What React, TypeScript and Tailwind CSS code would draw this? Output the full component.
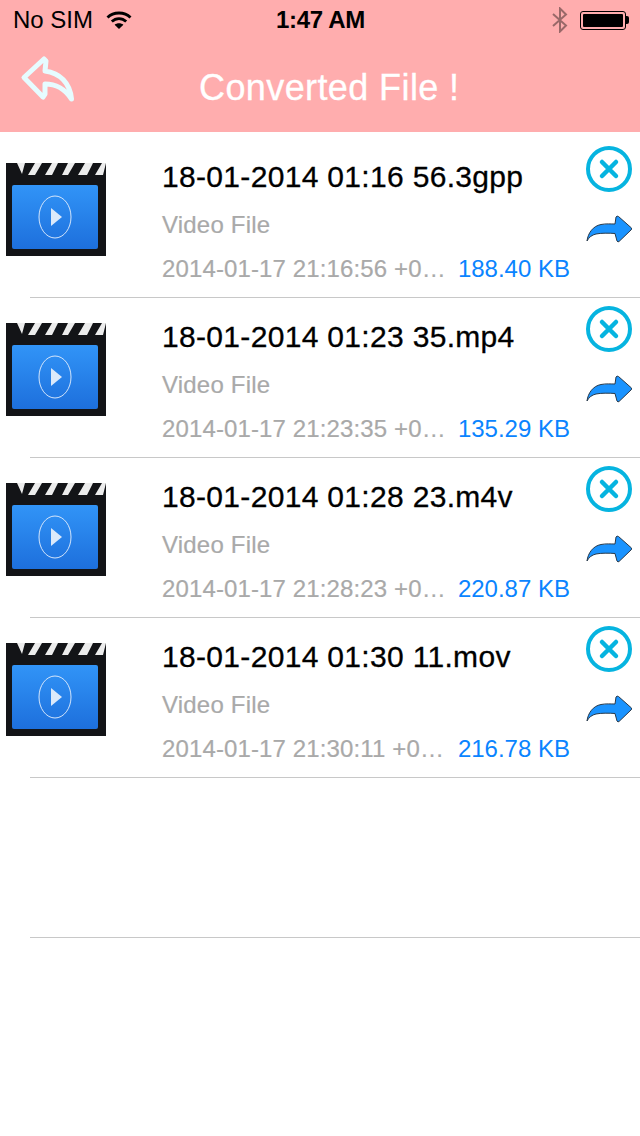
const files = [
  { name: "18-01-2014 01:16 56.3gpp", date: "2014-01-17 21:16:56 +0…", size: "188.40 KB" },
  { name: "18-01-2014 01:23 35.mp4", date: "2014-01-17 21:23:35 +0…", size: "135.29 KB" },
  { name: "18-01-2014 01:28 23.m4v", date: "2014-01-17 21:28:23 +0…", size: "220.87 KB" },
  { name: "18-01-2014 01:30 11.mov", date: "2014-01-17 21:30:11 +0…", size: "216.78 KB" },
]

function WifiIcon() {
  return (
    <svg width="26" height="20" viewBox="0 0 26 20" className="ml-[13px]">
      <path d="M1.5 7.5 C7.5 1.5 18.5 1.5 24.5 7.5" fill="none" stroke="#000" strokeWidth="2.8" />
      <path d="M5.8 11.6 C10 7.6 16 7.6 20.2 11.6" fill="none" stroke="#000" strokeWidth="2.8" />
      <path d="M13 19 L8.6 14.8 C11 12.8 15 12.8 17.4 14.8 Z" fill="#000" />
    </svg>
  )
}

function BluetoothIcon() {
  return (
    <svg width="16" height="26" viewBox="0 0 16 26" className="mr-[12px]">
      <path d="M1 7 L14 18.5 L8 24.5 L8 1.5 L14 7.5 L1 19" fill="none" stroke="#000" strokeOpacity="0.4" strokeWidth="2" />
    </svg>
  )
}

function BatteryIcon() {
  return (
    <div className="flex items-center mr-[11px]">
      <div className="w-[46px] h-[19px] rounded-[3px] border border-black p-[2px]">
        <div className="w-full h-full rounded-[1px] bg-black" />
      </div>
      <div className="w-[3px] h-[8px] bg-black rounded-r-[2px]" />
    </div>
  )
}

function BackIcon() {
  return (
    <svg width="60" height="52" viewBox="0 0 60 52">
      <path
        d="M6 24.5 L26 6 L28 8 L27 18 C42 20 52 30 53.5 46 C46 35 38 31 27 31 L27 41 L25 44 Z"
        fill="none"
        stroke="#e6fcff"
        strokeWidth="5"
        strokeLinejoin="round"
      />
    </svg>
  )
}

function Thumb() {
  return (
    <svg width="100" height="93" viewBox="0 0 100 93">
      <defs>
        <linearGradient id="screen" x1="0" y1="0" x2="0" y2="1">
          <stop offset="0" stopColor="#3194f7" />
          <stop offset="1" stopColor="#1d6fdc" />
        </linearGradient>
      </defs>
      <rect width="100" height="93" fill="#131417" />
      <path d="M11 0 L19 0 L16 11 Z M29 0 L36 0 L29 12 L22 12 Z M46 0 L52 0 L46 12 L39 12 Z M62 0 L69 0 L62 12 L56 12 Z M79 0 L87 0 L81 12 L72 12 Z M96 0 L100 0 L97 12 L89 12 Z" fill="#ececec" />
      <rect x="6" y="22" width="86" height="64" rx="2" fill="url(#screen)" />
      <ellipse cx="49" cy="54" rx="16" ry="21" fill="none" stroke="#d5e6fb" strokeWidth="1" />
      <path d="M45 45 L56 54 L45 63 Z" fill="#dbe9fa" />
    </svg>
  )
}

function ShareIcon() {
  return (
    <svg width="46" height="28" viewBox="0 0 46 28">
      <path
        d="M1 26 C2 18 7 11 15 9.5 C20 8.5 25 9 29 9 L30 2 Q31 0.5 32.5 1.5 L45.5 13 Q46 14 45 15 L33 26.5 Q32 27.5 31 26 L29 18.5 C23 18 15 18 10 19 C6 20 3 22 1 26 Z"
        fill="#1a93ff"
        stroke="#2a3a4a"
        strokeWidth="1"
      />
    </svg>
  )
}

function CloseIcon() {
  return (
    <svg width="46" height="46" viewBox="0 0 46 46">
      <circle cx="23" cy="23" r="21" fill="none" stroke="#06b4e0" strokeWidth="4" />
      <path d="M16 16 L30 30 M30 16 L16 30" stroke="#06b4e0" strokeWidth="4.5" strokeLinecap="round" />
    </svg>
  )
}

export default function App() {
  return (
    <div className="w-[640px] h-[1136px] bg-white overflow-hidden font-['Liberation_Sans',sans-serif]">
      {/* Status + nav bar */}
      <div className="h-[132px] bg-[#ffadae]">
        <div className="h-[40px] flex items-center text-black text-[24px]">
          <div className="flex-1 flex items-center pl-[13px]">
            <span>No SIM</span>
            <WifiIcon />
          </div>
          <div className="font-bold tracking-[-0.3px] pr-[12px]">1:47 AM</div>
          <div className="flex-1 flex items-center justify-end">
            <BluetoothIcon />
            <BatteryIcon />
          </div>
        </div>
        <div className="h-[92px] flex items-start relative">
          <div className="pl-[18px] pt-[13px]">
            <BackIcon />
          </div>
          <div className="absolute left-[199px] top-[28px] text-white text-[36px] leading-[40px] tracking-[0.4px] whitespace-nowrap [-webkit-text-stroke:0.3px_white]">
            Converted File !
          </div>
        </div>
      </div>

      {/* File list */}
      <div className="pt-[6px]">
        {files.map((f) => (
          <div key={f.name} className="h-[160px] flex relative">
            <div className="w-[162px] pl-[6px] pt-[25px] shrink-0">
              <Thumb />
            </div>
            <div className="w-[408px] shrink-0 pt-[21px]">
              <div className="text-[30px] leading-[36px] text-black tracking-[0.32px] whitespace-nowrap [-webkit-text-stroke:0.3px_black]">{f.name}</div>
              <div className="text-[24px] leading-[28px] text-[#a9a9a9] tracking-[0.2px] mt-[16px] [-webkit-text-stroke:0.2px_#a9a9a9]">Video File</div>
              <div className="flex justify-between text-[24px] leading-[28px] mt-[16px] whitespace-nowrap">
                <span className="text-[#a9a9a9] tracking-[0.13px] [-webkit-text-stroke:0.2px_#a9a9a9]">{f.date}</span>
                <span className="text-[#0a84ff]">{f.size}</span>
              </div>
            </div>
            <div className="pl-[16px] pt-[8px] flex flex-col gap-[23px]">
              <CloseIcon />
              <ShareIcon />
            </div>
            <div className="absolute left-[30px] right-0 bottom-0 h-px bg-[#c8c8c8]" />
          </div>
        ))}
        <div className="h-[160px] ml-[30px] border-b border-[#c8c8c8]" />
      </div>
    </div>
  )
}
